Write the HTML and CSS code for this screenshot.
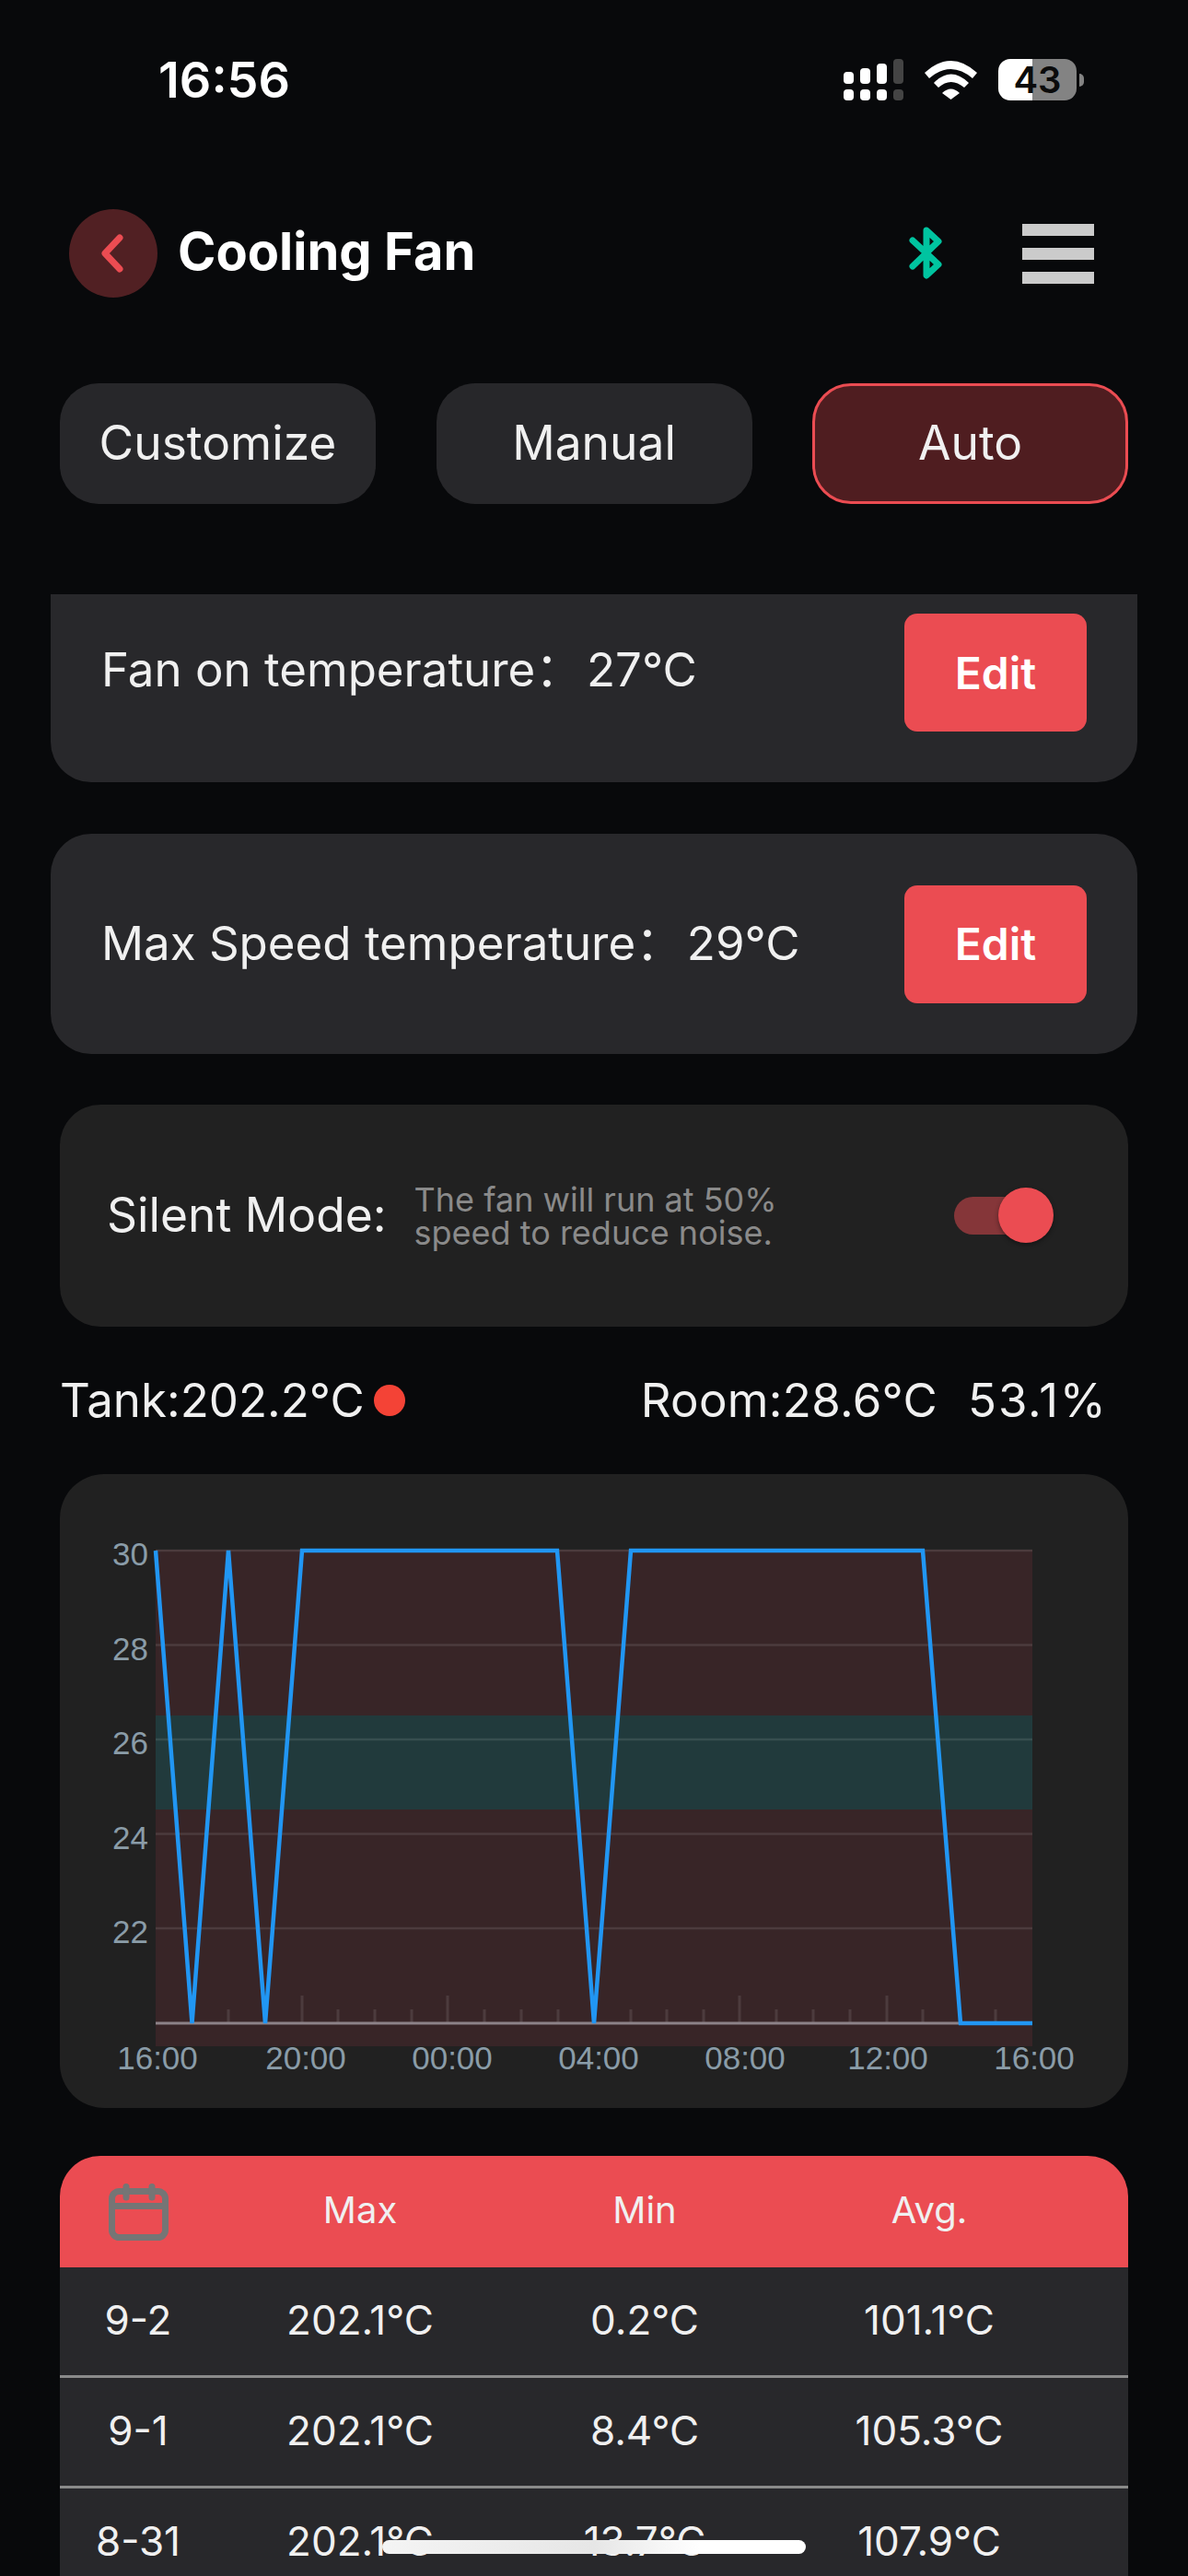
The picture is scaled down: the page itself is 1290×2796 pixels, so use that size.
FILE: index.html
```html
<!DOCTYPE html>
<html>
<head>
	<meta charset="UTF-8">
	<title>Cooling Fan</title>
	<link rel="stylesheet" href="styles.css">
</head>
<body>
	<div class="phone">
		<div class="statusbar">
			<span class="clock">16:56</span>
			<div class="status-icons">
				<svg class="signal" width="65" height="45" viewBox="0 0 65 45">
					<rect x="0" y="14" width="11" height="13" rx="4" fill="#fff"/>
					<rect x="18" y="10" width="11" height="17" rx="4" fill="#fff"/>
					<rect x="36" y="5" width="11" height="22" rx="4" fill="#fff"/>
					<rect x="54" y="0" width="11" height="27" rx="4" fill="#444"/>
					<rect x="0" y="33" width="11" height="12" rx="4" fill="#fff"/>
					<rect x="18" y="33" width="11" height="12" rx="4" fill="#fff"/>
					<rect x="36" y="33" width="11" height="12" rx="4" fill="#fff"/>
					<rect x="54" y="33" width="11" height="12" rx="4" fill="#444"/>
				</svg>
				<svg class="wifi" width="57" height="42" viewBox="0 0 57 42">
					<path d="M0 13Q28.500-13 57 13L52 19Q28.500-1 5 19Z" fill="#fff"/>
					<path d="M10 24Q28.500 5 48 24L43 29Q28.500 17 15 29Z" fill="#fff"/>
					<path d="M19 35Q28.500 26 38 35L28.500 42Z" fill="#fff"/>
				</svg>
				<div class="battery"><span>43</span></div>
				<div class="battery-nub"></div>
			</div>
		</div>

		<header class="topbar">
			<div class="back">
				<svg width="24" height="42" viewBox="0 0 24 42"><path d="M20 4L4 21L20 38" fill="none" stroke="#eb4c52" stroke-width="7" stroke-linecap="round" stroke-linejoin="round"/></svg>
			</div>
			<h1>Cooling Fan</h1>
			<svg class="bt" width="38" height="60" viewBox="0 0 38 60"><path d="M5 16L33 42L20 54V5L33 17L5 44" fill="none" stroke="#00c4a0" stroke-width="7" stroke-linecap="round" stroke-linejoin="round"/></svg>
			<div class="menu"><i></i><i></i><i></i></div>
		</header>

		<nav class="tabs">
			<a>Customize</a>
			<a>Manual</a>
			<a class="active">Auto</a>
		</nav>

		<section class="temp-card clipped">
			<span>Fan on temperature：&#8202;27°C</span>
			<button>Edit</button>
		</section>
		<section class="temp-card">
			<span>Max Speed temperature：&#8202;29°C</span>
			<button>Edit</button>
		</section>

		<section class="silent">
			<span class="silent-label">Silent Mode:</span>
			<p>The fan will run at 50%<br>speed to reduce noise.</p>
			<div class="toggle"><b></b></div>
		</section>

		<div class="readings">
			<span>Tank:202.2°C</span>
			<i class="dot"></i>
			<span class="room">Room:28.6°C</span>
			<span class="humidity">53.1%</span>
		</div>

		<section class="chart">
			<svg width="1160" height="688" viewBox="65 1600 1160 688">
				<rect x="169" y="1682" width="952" height="539" fill="#382527"/>
				<rect x="169" y="1862" width="952" height="102" fill="#213a3c"/>
				<path d="M169 1683H1121M169 1785.500H1121M169 1888H1121M169 1990.500H1121M169 2093H1121" stroke="#fff" stroke-opacity=".1" stroke-width="2.500"/>
				<path d="M248 2196v-15M367 2196v-15M407 2196v-15M447 2196v-15M526 2196v-15M566 2196v-15M606 2196v-15M685 2196v-15M724 2196v-15M764 2196v-15M843 2196v-15M883 2196v-15M923 2196v-15M1002 2196v-15M1081 2196v-15M328 2196v-30M486 2196v-30M803 2196v-30M963 2196v-30" stroke="#fff" stroke-opacity=".1" stroke-width="3"/>
				<path d="M169 2196H1121" stroke="#8c8288" stroke-width="3"/>
				<path d="M169 1683L208.500 2196L248 1683L288 2196L328 1683H605L645 2196L685 1683H1002L1043 2196H1121" fill="none" stroke="#2196f3" stroke-width="4.500"/>
				<g class="y-labels">
					<text x="161" y="1699">30</text>
					<text x="161" y="1802">28</text>
					<text x="161" y="1904">26</text>
					<text x="161" y="2007">24</text>
					<text x="161" y="2109">22</text>
				</g>
				<g class="x-labels">
					<text x="171" y="2246">16:00</text>
					<text x="332" y="2246">20:00</text>
					<text x="491" y="2246">00:00</text>
					<text x="650" y="2246">04:00</text>
					<text x="809" y="2246">08:00</text>
					<text x="964" y="2246">12:00</text>
					<text x="1123" y="2246">16:00</text>
				</g>
			</svg>
		</section>

		<section class="stats">
			<div class="stats-head">
				<svg width="65" height="62" viewBox="0 0 65 62">
					<rect x="3.500" y="8.500" width="58" height="50" rx="8" fill="none" stroke="#757575" stroke-width="7"/>
					<path d="M3 24.500H62" stroke="#757575" stroke-width="7"/>
					<path d="M19 3.500V15M47 3.500V15" stroke="#757575" stroke-width="7" stroke-linecap="round"/>
				</svg>
				<span>Max</span><span>Min</span><span>Avg.</span>
			</div>
			<div class="stats-row"><span>9-2</span><span>202.1°C</span><span>0.2°C</span><span>101.1°C</span></div>
			<div class="stats-row"><span>9-1</span><span>202.1°C</span><span>8.4°C</span><span>105.3°C</span></div>
			<div class="stats-row"><span>8-31</span><span>202.1°C</span><span>13.7°C</span><span>107.9°C</span></div>
		</section>

		<div class="home-bar"></div>
	</div>
</body>
</html>
```

FILE: styles.css
```css
body,h1,p{
	margin: 0;
}
body{
	background: #08090b;
	font-family: Inter, "Noto Sans CJK SC", sans-serif;
	color: #f0f0f0;
}
.phone{
	position: relative;
	width: 1290px;
	height: 2796px;
	overflow: hidden;
}

/* status bar */
.statusbar{
	display: flex;
	justify-content: space-between;
	align-items: center;
	height: 45px;
	padding: 64px 113px 0 172px;
}
.clock{
	font-size: 54px;
	font-weight: 600;
	color: #fff;
}
.status-icons{
	display: flex;
	align-items: center;
	gap: 0;
}
.wifi{
	margin-left: 23px;
}
.battery{
	width: 85px;
	height: 45px;
	margin-left: 23px;
	border-radius: 13px;
	background: linear-gradient(90deg, #fff 44%, #838383 44%);
	color: #0b0b0b;
	font-size: 40px;
	font-weight: 600;
	line-height: 45px;
	text-align: center;
}
.battery-nub{
	width: 5px;
	height: 14px;
	margin-left: 3px;
	border-radius: 0 7px 7px 0;
	background: #838383;
}

/* top bar */
.topbar{
	display: flex;
	align-items: center;
	height: 96px;
	margin-top: 118px;
	padding-left: 75px;
}
.back{
	display: flex;
	justify-content: center;
	align-items: center;
	width: 96px;
	height: 96px;
	border-radius: 50%;
	background: #512023;
}
.back svg{
	margin-right: 2px;
}
.topbar h1{
	flex: 1;
	margin: 0 0 4px 22px;
	font-size: 56px;
	font-weight: 700;
	color: #fff;
}
.menu{
	display: flex;
	flex-direction: column;
	gap: 13px;
	width: 78px;
	margin: 0 102px 0 86px;
}
.menu i{
	height: 13px;
	background: #cbcbcb;
}

/* mode tabs */
.tabs{
	display: flex;
	justify-content: space-between;
	margin: 93px 65px 0;
}
.tabs a{
	width: 343px;
	height: 131px;
	border-radius: 42px;
	background: #27272a;
	font-size: 51.500px;
	line-height: 128px;
	text-align: center;
}
.tabs a.active{
	box-sizing: border-box;
	border: 3px solid #eb4c52;
	background: #4f1d20;
	line-height: 122px;
}

/* temperature cards */
.temp-card{
	display: flex;
	justify-content: space-between;
	align-items: center;
	box-sizing: border-box;
	height: 239px;
	margin: 56px 55px 0;
	padding: 0 55px 0 55px;
	border-radius: 44px;
	background: #28282b;
	font-size: 51px;
}
.temp-card.clipped{
	align-items: flex-start;
	height: 204px;
	margin-top: 98px;
	padding-top: 21px;
	border-radius: 0 0 44px 44px;
}
.temp-card.clipped span{
	margin-top: 20px;
}
.temp-card span{
	margin-bottom: 10px;
}
.temp-card button{
	width: 198px;
	height: 128px;
	border: 0;
	border-radius: 14px;
	background: #eb4c52;
	color: #fff;
	font-family: inherit;
	font-size: 48px;
	font-weight: 600;
}

/* silent mode */
.silent{
	display: flex;
	align-items: center;
	box-sizing: border-box;
	height: 241px;
	margin: 55px 65px 0;
	padding: 0 81px 0 51px;
	border-radius: 44px;
	background: #212121;
}
.silent-label{
	margin-bottom: 4px;
	font-size: 51.500px;
}
.silent p{
	flex: 1;
	margin-left: 30px;
	color: #8a8a8a;
	font-size: 36px;
	line-height: 36px;
}
.toggle{
	position: relative;
	width: 84px;
	height: 41px;
	margin-right: 24px;
	border-radius: 21px;
	background: #853639;
}
.toggle b{
	position: absolute;
	top: -10px;
	right: -24px;
	width: 60px;
	height: 60px;
	border-radius: 50%;
	background: #eb4c52;
	box-shadow: 0 2px 5px rgba(0,0,0,.4);
}

/* live readings */
.readings{
	display: flex;
	align-items: center;
	height: 80px;
	margin-top: 40px;
	padding-left: 65px;
	font-size: 51px;
}
.readings span{
	margin-bottom: 2px;
}
.dot{
	width: 34px;
	height: 34px;
	margin-left: 10px;
	border-radius: 50%;
	background: #f44336;
}
.room{
	margin-left: 256px;
	letter-spacing: .3px;
}
.humidity{
	margin-left: 33px;
	letter-spacing: 1.800px;
}

/* chart */
.chart{
	height: 688px;
	margin: 40px 65px 0;
	border-radius: 48px;
	background: #212121;
}
.chart svg{
	display: block;
}
.chart text{
	fill: #8a9ca8;
	font-family: "Liberation Sans", sans-serif;
	font-size: 35px;
}
.y-labels text{
	text-anchor: end;
}
.x-labels text{
	text-anchor: middle;
}

/* daily table */
.stats{
	margin: 52px 65px 0;
	font-size: 44px;
}
.stats-head,
.stats-row{
	display: grid;
	grid-template-columns: 170px 312px 306px 312px;
	justify-items: center;
	align-items: center;
}
.stats-head{
	height: 121px;
	padding-bottom: 0;
	border-radius: 44px 44px 0 0;
	background: #eb4c52;
	font-size: 40px;
}
.stats-head span{
	margin-bottom: 4px;
}
.stats-row{
	height: 117px;
	padding-right: 60px;
	border-bottom: 3px solid #8a8a8a;
	background: #28282b;
}
.stats-row span{
	margin-bottom: 4px;
}

.home-bar{
	position: absolute;
	left: 415px;
	top: 2757px;
	width: 460px;
	height: 15px;
	border-radius: 8px;
	background: linear-gradient(90deg, #f4f4f4, #e6e6e6 50%, #fff 75%);
}
```
